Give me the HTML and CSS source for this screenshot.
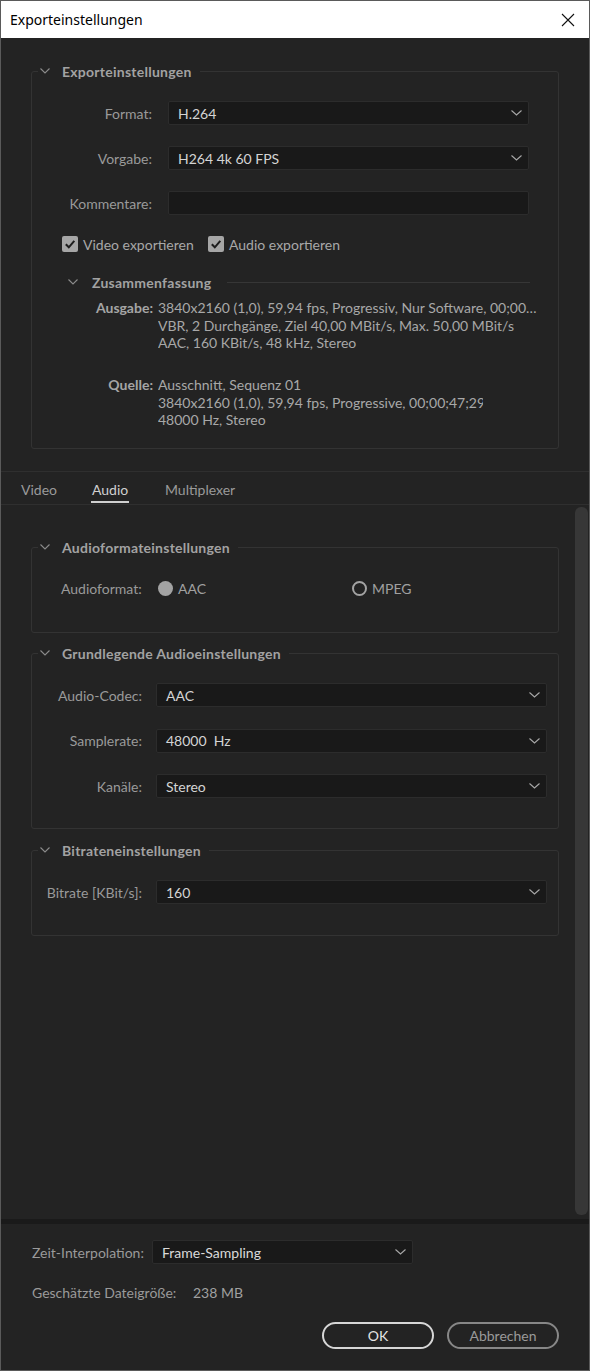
FILE: index.html
```html
<!DOCTYPE html>
<html lang="de">
<head>
<meta charset="utf-8">
<title>Exporteinstellungen</title>
<link rel="stylesheet" href="styles.css">
</head>
<body>
<div class="window">
  <div class="titlebar">
    <span class="title">Exporteinstellungen</span>
    <svg class="close" width="14" height="14" viewBox="0 0 14 14"><path d="M1 1L13 13M13 1L1 13" stroke="#111" stroke-width="1.1" fill="none"/></svg>
  </div>

  <div class="top">
    <section class="group">
      <div class="group-head">
        <svg class="chev" width="10" height="6" viewBox="0 0 10 6"><path d="M0.5 0.5L5 5L9.5 0.5" stroke="#8c8c8c" stroke-width="1.1" fill="none"/></svg>
        <span>Exporteinstellungen</span>
      </div>
      <div class="form form-export">
        <div class="lbl">Format:</div>
        <div class="select"><span>H.264</span><svg width="11" height="6" viewBox="0 0 11 6"><path d="M0.5 0.5L5.5 5L10.5 0.5" stroke="#a8a8a8" stroke-width="1.1" fill="none"/></svg></div>
        <div class="lbl">Vorgabe:</div>
        <div class="select"><span>H264 4k 60 FPS</span><svg width="11" height="6" viewBox="0 0 11 6"><path d="M0.5 0.5L5.5 5L10.5 0.5" stroke="#a8a8a8" stroke-width="1.1" fill="none"/></svg></div>
        <div class="lbl">Kommentare:</div>
        <div class="select"></div>
      </div>
      <div class="checks">
        <div class="check check-first">
          <svg width="16" height="16" viewBox="0 0 16 16"><rect width="16" height="16" rx="2" fill="#a6a6a6"/><path d="M3.8 8.3L6.8 11.3L12.3 4.8" stroke="#1e1e1e" stroke-width="2" fill="none"/></svg>
          <span>Video exportieren</span>
        </div>
        <div class="check">
          <svg width="16" height="16" viewBox="0 0 16 16"><rect width="16" height="16" rx="2" fill="#a6a6a6"/><path d="M3.8 8.3L6.8 11.3L12.3 4.8" stroke="#1e1e1e" stroke-width="2" fill="none"/></svg>
          <span>Audio exportieren</span>
        </div>
      </div>
      <div class="sub-head">
        <svg class="chev" width="10" height="6" viewBox="0 0 10 6"><path d="M0.5 0.5L5 5L9.5 0.5" stroke="#8c8c8c" stroke-width="1.1" fill="none"/></svg>
        <span>Zusammenfassung</span>
        <div class="sub-line"></div>
      </div>
      <div class="summary">
        <div class="sum-lbl">Ausgabe:</div>
        <div class="sum-val">
          <div>3840x2160 (1,0), 59,94 fps, Progressiv, Nur Software, 00;00…</div>
          <div>VBR, 2 Durchgänge, Ziel 40,00 MBit/s, Max. 50,00 MBit/s</div>
          <div>AAC, 160 KBit/s, 48 kHz, Stereo</div>
        </div>
        <div class="sum-lbl">Quelle:</div>
        <div class="sum-val clip">
          <div>Ausschnitt, Sequenz 01</div>
          <div>3840x2160 (1,0), 59,94 fps, Progressive, 00;00;47;29</div>
          <div>48000 Hz, Stereo</div>
        </div>
      </div>
    </section>
  </div>

  <div class="tabs">
    <div class="tab tab-video"><span>Video</span></div>
    <div class="tab tab-audio active"><span>Audio</span></div>
    <div class="tab"><span>Multiplexer</span></div>
  </div>

  <div class="scroll">
    <div class="scroll-content">
      <section class="group g-format">
        <div class="group-head">
          <svg class="chev" width="10" height="6" viewBox="0 0 10 6"><path d="M0.5 0.5L5 5L9.5 0.5" stroke="#8c8c8c" stroke-width="1.1" fill="none"/></svg>
          <span>Audioformateinstellungen</span>
        </div>
        <div class="radio-row">
          <div class="lbl-left">Audioformat:</div>
          <div class="radio-opt"><span class="radio filled"></span><span class="opt-text">AAC</span></div>
          <div class="radio-opt"><span class="radio ring"></span><span class="opt-text">MPEG</span></div>
        </div>
      </section>

      <section class="group g-basic">
        <div class="group-head">
          <svg class="chev" width="10" height="6" viewBox="0 0 10 6"><path d="M0.5 0.5L5 5L9.5 0.5" stroke="#8c8c8c" stroke-width="1.1" fill="none"/></svg>
          <span>Grundlegende Audioeinstellungen</span>
        </div>
        <div class="form form-audio">
          <div class="lbl">Audio-Codec:</div>
          <div class="select"><span>AAC</span><svg width="11" height="6" viewBox="0 0 11 6"><path d="M0.5 0.5L5.5 5L10.5 0.5" stroke="#a8a8a8" stroke-width="1.1" fill="none"/></svg></div>
          <div class="lbl">Samplerate:</div>
          <div class="select"><span>48000&nbsp; Hz</span><svg width="11" height="6" viewBox="0 0 11 6"><path d="M0.5 0.5L5.5 5L10.5 0.5" stroke="#a8a8a8" stroke-width="1.1" fill="none"/></svg></div>
          <div class="lbl">Kanäle:</div>
          <div class="select"><span>Stereo</span><svg width="11" height="6" viewBox="0 0 11 6"><path d="M0.5 0.5L5.5 5L10.5 0.5" stroke="#a8a8a8" stroke-width="1.1" fill="none"/></svg></div>
        </div>
      </section>

      <section class="group g-bitrate">
        <div class="group-head">
          <svg class="chev" width="10" height="6" viewBox="0 0 10 6"><path d="M0.5 0.5L5 5L9.5 0.5" stroke="#8c8c8c" stroke-width="1.1" fill="none"/></svg>
          <span>Bitrateneinstellungen</span>
        </div>
        <div class="form form-audio">
          <div class="lbl">Bitrate [KBit/s]:</div>
          <div class="select"><span>160</span><svg width="11" height="6" viewBox="0 0 11 6"><path d="M0.5 0.5L5.5 5L10.5 0.5" stroke="#a8a8a8" stroke-width="1.1" fill="none"/></svg></div>
        </div>
      </section>
    </div>
    <div class="scrollbar"></div>
  </div>

  <div class="sep"></div>

  <div class="footer">
    <div class="foot-row">
      <div class="foot-lbl">Zeit-Interpolation:</div>
      <div class="select foot-select"><span>Frame-Sampling</span><svg width="11" height="6" viewBox="0 0 11 6"><path d="M0.5 0.5L5.5 5L10.5 0.5" stroke="#a8a8a8" stroke-width="1.1" fill="none"/></svg></div>
    </div>
    <div class="size-row">
      <div class="size-lbl">Geschätzte Dateigröße:</div>
      <div class="size-val">238 MB</div>
    </div>
    <div class="buttons">
      <button class="btn btn-ok">OK</button>
      <button class="btn btn-cancel">Abbrechen</button>
    </div>
  </div>
</div>
</body>
</html>
```

FILE: styles.css
```css
* { box-sizing: border-box; }

body {
  margin: 0;
  background: #232323;
  font-family: Lato, "Noto Sans", sans-serif;
  font-size: 14px;
}

.window {
  width: 590px;
  height: 1371px;
  border: 1px solid #5a5a5a;
  background: #232323;
  display: flex;
  flex-direction: column;
  overflow: hidden;
}

.titlebar {
  flex: none;
  height: 37px;
  background: #ffffff;
  display: flex;
  align-items: center;
  justify-content: space-between;
  padding: 0 14px 0 9px;
}

.title {
  font-family: "Noto Sans", "Open Sans", sans-serif;
  font-size: 14px;
  color: #000;
}

.close { display: block; }

.top {
  flex: none;
  padding: 33px 30px 22px 30px;
}

.group {
  border: 1px solid #333333;
  border-radius: 3px;
}

.group-head {
  display: flex;
  align-items: center;
  gap: 12px;
  height: 20px;
  width: max-content;
  margin: -11px 0 0 6px;
  padding: 0 8px 0 2px;
  background: #232323;
  color: #a2a2a2;
  font-weight: bold;
  letter-spacing: 0.25px;
}

.chev { display: block; flex: none; }

.form {
  display: grid;
  align-items: center;
  margin-top: 20px;
}

.form-export {
  grid-template-columns: 120px 1fr;
  column-gap: 16px;
  row-gap: 21px;
  padding-right: 29px;
}

.form-audio {
  grid-template-columns: 110px 1fr;
  column-gap: 14px;
  row-gap: 21.5px;
  padding-right: 11px;
}

.lbl {
  text-align: right;
  color: #9a9a9a;
  white-space: nowrap;
}

.select {
  height: 24px;
  background: #191919;
  border: 1px solid #2c2c2c;
  border-radius: 2px;
  display: flex;
  align-items: center;
  justify-content: space-between;
  padding: 0 6px 0 9px;
  color: #d4d4d4;
}

.select svg { display: block; flex: none; }

.checks {
  display: flex;
  align-items: center;
  margin-top: 21px;
  padding-left: 30px;
  height: 16px;
  color: #a8a8a8;
}

.check {
  display: flex;
  align-items: center;
  gap: 5px;
}

.check svg { display: block; }

.check-first { width: 146px; }

.sub-head {
  display: flex;
  align-items: center;
  height: 18px;
  margin-top: 21px;
  padding-left: 36px;
  gap: 14px;
  color: #a2a2a2;
  font-weight: bold;
  letter-spacing: 0.25px;
}

.sub-line {
  flex: 1;
  height: 1px;
  background: #363636;
  margin: 0 28px 0 2px;
}

.summary {
  display: grid;
  grid-template-columns: 121px 1fr;
  column-gap: 5px;
  row-gap: 24.5px;
  margin-top: 8px;
  padding-bottom: 19.5px;
  line-height: 17.5px;
}

.sum-lbl {
  text-align: right;
  font-weight: bold;
  color: #a5a5a5;
}

.sum-val { color: #a8a8a8; }

.sum-val div {
  white-space: nowrap;
  overflow: hidden;
}

.clip { width: 325px; }

.tabs {
  flex: none;
  height: 34px;
  border-top: 1px solid #2f2f2f;
  border-bottom: 1px solid #2f2f2f;
  display: flex;
  padding-left: 19px;
}

.tab {
  display: flex;
  align-items: flex-end;
  color: #9a9a9a;
}

.tab span {
  line-height: 18px;
  padding: 0 1px 2px;
  margin-bottom: 1px;
  border-bottom: 2px solid transparent;
}

.tab-video { width: 72px; }
.tab-audio { width: 73px; margin-left: -1px; }

.tab.active { color: #d0d0d0; }
.tab.active span { border-bottom-color: #cfcfcf; }

.scroll {
  flex: 1;
  display: flex;
  min-height: 0;
}

.scroll-content {
  flex: 1;
  padding: 42px 16px 0 30px;
}

.scrollbar {
  width: 13px;
  margin: 2px 1px 4px 0;
  background: #373737;
  border-radius: 6px;
}

.radio-row {
  display: flex;
  align-items: center;
  height: 16px;
  margin-top: 23px;
  margin-bottom: 35px;
  padding-left: 29px;
  color: #9a9a9a;
}

.lbl-left { width: 97px; }

.radio-opt {
  width: 194px;
  display: flex;
  align-items: center;
  gap: 5px;
}

.radio {
  width: 15px;
  height: 15px;
  border-radius: 50%;
  flex: none;
}

.radio.filled { background: #a3a3a3; }
.radio.ring { border: 2.5px solid #a3a3a3; }

.opt-text { color: #a0a0a0; }

.g-format { height: 86px; }

.g-basic {
  margin-top: 20px;
  padding-bottom: 30px;
}

.g-bitrate {
  margin-top: 21px;
  padding-bottom: 31px;
}

.sep {
  flex: none;
  height: 5px;
  background: #1a1a1a;
}

.footer {
  flex: none;
  height: 146px;
  padding: 16px 30px 0 31px;
}

.foot-row {
  display: flex;
  align-items: center;
}

.foot-lbl {
  width: 120px;
  color: #9a9a9a;
  white-space: nowrap;
}

.foot-select {
  width: 261px;
  color: #dadada;
}

.size-row {
  display: flex;
  margin-top: 20px;
  line-height: 18px;
  color: #9a9a9a;
}

.size-lbl { width: 161px; }

.size-val { color: #a0a0a0; }

.buttons {
  display: flex;
  justify-content: flex-end;
  gap: 13px;
  margin-top: 20px;
}

.btn {
  width: 112px;
  height: 27px;
  border-radius: 14px;
  background: transparent;
  font-family: Lato, "Noto Sans", sans-serif;
  font-size: 14px;
  padding: 0;
}

.btn-ok {
  border: 2px solid #d6d6d6;
  color: #e4e4e4;
}

.btn-cancel {
  border: 2px solid #878787;
  color: #9a9a9a;
}
```
